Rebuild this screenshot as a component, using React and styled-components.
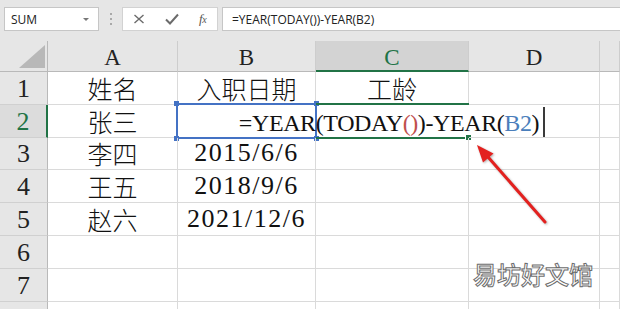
import React from "react";
import styled, { createGlobalStyle } from "styled-components";

const GREEN = "#217346";
const BLUE = "#4472c4";

const GlobalStyle = createGlobalStyle`
  html, body {
    margin: 0;
    padding: 0;
    background: #fff;
  }
  body {
    width: 620px;
    height: 309px;
    overflow: hidden;
  }
`;

const FORMULA = "=YEAR(TODAY())-YEAR(B2)";

const rows = [
  ["姓名", "入职日期", "工龄", ""],
  ["张三", "", null, ""],
  ["李四", "2015/6/6", "", ""],
  ["王五", "2018/9/6", "", ""],
  ["赵六", "2021/12/6", "", ""],
  ["", "", "", ""],
  ["", "", "", ""],
  ["", "", "", ""]
];

const Page = styled.div`
  position: relative;
  width: 620px;
  height: 309px;
  overflow: hidden;
  background: #fff;
`;

/* ---------- formula bar ---------- */

const Toolbar = styled.div`
  box-sizing: border-box;
  height: 41px;
  background: #e6e6e6;
  display: flex;
  align-items: flex-start;
  padding: 7px 0 0 4px;
  font-family: "Open Sans", "Liberation Sans", sans-serif;
  font-size: 12px;
  color: #222;
`;

const NameBox = styled.div`
  box-sizing: border-box;
  width: 95px;
  height: 24px;
  background: #fff;
  border: 1px solid #c6c6c6;
  display: flex;
  align-items: center;
  justify-content: space-between;
  padding: 0 9px 0 6px;
`;

const Caret = styled.span`
  width: 0;
  height: 0;
  border-left: 3px solid transparent;
  border-right: 3px solid transparent;
  border-top: 3px solid #777;
`;

const Grip = styled.div`
  width: 23px;
  height: 24px;
  display: flex;
  flex-direction: column;
  align-items: center;
  justify-content: center;
  gap: 3px;

  span {
    width: 2px;
    height: 2px;
    background: #a9a9a9;
  }
`;

const FxBox = styled.div`
  box-sizing: border-box;
  width: 96px;
  height: 24px;
  background: #fff;
  border: 1px solid #d2d2d2;
  display: flex;
  align-items: center;
  padding-left: 10px;
  gap: 20px;
`;

const Fx = styled.span`
  font-family: "Liberation Serif", serif;
  font-style: italic;
  font-size: 13px;
  color: #555;
  letter-spacing: -0.5px;

  small {
    font-size: 10px;
  }
`;

const FormulaInput = styled.div`
  box-sizing: border-box;
  flex: 1;
  height: 24px;
  margin-left: 4px;
  background: #fff;
  border: 1px solid #c6c6c6;
  border-right: 0;
  display: flex;
  align-items: center;
  padding-left: 9px;
`;

/* ---------- sheet ---------- */

const Sheet = styled.div`
  display: grid;
  grid-template-columns: 48px 130px 138px 153px 131px 20px;
  grid-template-rows: 31px;
  grid-auto-rows: 32.8px;
`;

const Corner = styled.div`
  box-sizing: border-box;
  background: #e6e6e6;
  border-right: 1px solid #b9b9b9;
  border-bottom: 1px solid #b9b9b9;
  display: flex;
  justify-content: flex-end;
  align-items: flex-end;
  padding: 0 2px 3px 0;

  &::after {
    content: "";
    width: 0;
    height: 0;
    border-left: 26px solid transparent;
    border-bottom: 23px solid #b8b8b8;
  }
`;

const ColHead = styled.div`
  box-sizing: border-box;
  background: ${p => (p.$active ? "#d3d3d3" : "#e6e6e6")};
  border-right: 1px solid #cdcdcd;
  border-bottom: ${p => (p.$active ? `2px solid ${GREEN}` : "1px solid #b9b9b9")};
  color: ${p => (p.$active ? GREEN : "#222")};
  display: flex;
  align-items: flex-end;
  justify-content: center;
  padding-bottom: ${p => (p.$active ? "1px" : "2px")};
  font: 23px/1 "Liberation Serif", serif;
`;

const RowHead = styled.div`
  box-sizing: border-box;
  background: ${p => (p.$active ? "#dcdcdc" : "#e6e6e6")};
  border-right: ${p => (p.$active ? `2px solid ${GREEN}` : "1px solid #b9b9b9")};
  border-bottom: 1px solid #d0d0d0;
  color: ${p => (p.$active ? GREEN : "#222")};
  display: flex;
  align-items: flex-end;
  justify-content: center;
  padding-bottom: 2px;
  font: 26px/1 "Liberation Serif", serif;
`;

const Cell = styled.div`
  box-sizing: border-box;
  position: relative;
  border-right: 1px solid ${p => (p.$open ? "transparent" : "#dadada")};
  border-bottom: 1px solid #dadada;
  display: flex;
  align-items: flex-end;
  justify-content: center;
  padding-bottom: ${p => (p.$date ? "3px" : "1px")};
  white-space: nowrap;
  color: #111;
  font: ${p => (p.$date ? "26px" : "25px")}/1 "Liberation Serif",
    "Noto Sans CJK SC", serif;
  font-weight: 300;
  letter-spacing: ${p => (p.$date ? "1.5px" : "0")};
`;

const RefFrame = styled.div`
  position: absolute;
  left: -2px;
  top: -2px;
  right: -2px;
  bottom: -2px;
  border: 2px solid ${BLUE};
  pointer-events: none;
`;

const Handle = styled.span`
  position: absolute;
  width: 5px;
  height: 5px;
  background: ${BLUE};
  ${p => (p.$x === "l" ? "left: -4px;" : "right: -4px;")}
  ${p => (p.$y === "t" ? "top: -4px;" : "bottom: -4px;")}
`;

const ActiveFrame = styled.div`
  position: absolute;
  left: 0;
  right: -1px;
  top: -2px;
  bottom: -2px;
  border-top: 2px solid ${GREEN};
  border-bottom: 2px solid ${GREEN};
  pointer-events: none;
`;

const FillHandle = styled.span`
  position: absolute;
  right: -3px;
  bottom: -4px;
  width: 5px;
  height: 5px;
  background: ${GREEN};
  border: 1px solid #fff;
`;

const EditText = styled.span`
  position: relative;
  z-index: 1;
  display: flex;
  align-items: flex-end;
  font-family: "Liberation Serif", serif;
  font-size: 24px;
  font-weight: 400;
  letter-spacing: -0.4px;
  padding-bottom: 1px;
`;

const Tok = styled.span`
  color: ${p => p.$c || "#111"};
`;

const TextCursor = styled.span`
  display: inline-block;
  width: 2px;
  height: 30px;
  margin-left: 4px;
  margin-bottom: -2px;
  background: #3a3a3a;
`;

const Arrow = styled.svg`
  position: absolute;
  left: 0;
  top: 0;
  pointer-events: none;
  filter: drop-shadow(1px 1px 1px rgba(0, 0, 0, 0.3));
`;

const Watermark = styled.div`
  position: absolute;
  left: 473px;
  top: 262px;
  font: 500 24px/1 "Noto Sans CJK SC", sans-serif;
  color: #fff;
  -webkit-text-stroke: 1px #6d6d6d;
  letter-spacing: 0;
`;

const FormulaTokens = () => (
  <EditText>
    <Tok>=YEAR(TODAY</Tok>
    <Tok $c="#c0504d">()</Tok>
    <Tok>)-YEAR(</Tok>
    <Tok $c="#4a7ebb">B2</Tok>
    <Tok>)</Tok>
    <TextCursor />
  </EditText>
);

const isDate = v => /^\d/.test(v || "");

export default function App() {
  return (
    <Page>
      <GlobalStyle />
      <Toolbar>
        <NameBox>
          SUM
          <Caret />
        </NameBox>
        <Grip>
          <span />
          <span />
          <span />
        </Grip>
        <FxBox>
          <svg width="12" height="12" viewBox="0 0 12 12">
            <path d="M1.5 2 L10.5 10 M10.5 2 L1.5 10" stroke="#6b6b6b" strokeWidth="1.4" />
          </svg>
          <svg width="14" height="12" viewBox="0 0 14 12">
            <path d="M1 6.5 L5 10.5 L13 1.5" stroke="#6b6b6b" strokeWidth="2" fill="none" />
          </svg>
          <Fx>
            f<small>x</small>
          </Fx>
        </FxBox>
        <FormulaInput>{FORMULA}</FormulaInput>
      </Toolbar>

      <Sheet>
        <Corner />
        {["A", "B", "C", "D", ""].map((c, i) => (
          <ColHead key={i} $active={c === "C"}>
            {c}
          </ColHead>
        ))}
        {rows.map((r, ri) => (
          <React.Fragment key={ri}>
            {/* row 8 is only a sliver at the bottom edge, its number falls below the fold */}
            <RowHead $active={ri === 1}>{ri < 7 ? ri + 1 : ""}</RowHead>
            {r.map((v, ci) => {
              const isRef = ri === 1 && ci === 1;
              const isActive = ri === 1 && ci === 2;
              return (
                <Cell key={ci} $date={isDate(v)} $open={isActive}>
                  {isActive ? <FormulaTokens /> : v}
                  {isRef && (
                    <RefFrame>
                      <Handle $x="l" $y="t" />
                      <Handle $x="r" $y="t" />
                      <Handle $x="l" $y="b" />
                      <Handle $x="r" $y="b" />
                    </RefFrame>
                  )}
                  {isActive && (
                    <ActiveFrame>
                      <FillHandle />
                    </ActiveFrame>
                  )}
                </Cell>
              );
            })}
            <Cell />
          </React.Fragment>
        ))}
      </Sheet>

      <Arrow width="620" height="309" viewBox="0 0 620 309">
        <line x1="545" y1="222" x2="488" y2="157" stroke="#e3211f" strokeWidth="3" strokeLinecap="round" />
        <polygon points="477,145 493.5,153.5 483,162.5" fill="#e3211f" />
      </Arrow>
      <Watermark>易坊好文馆</Watermark>
    </Page>
  );
}
